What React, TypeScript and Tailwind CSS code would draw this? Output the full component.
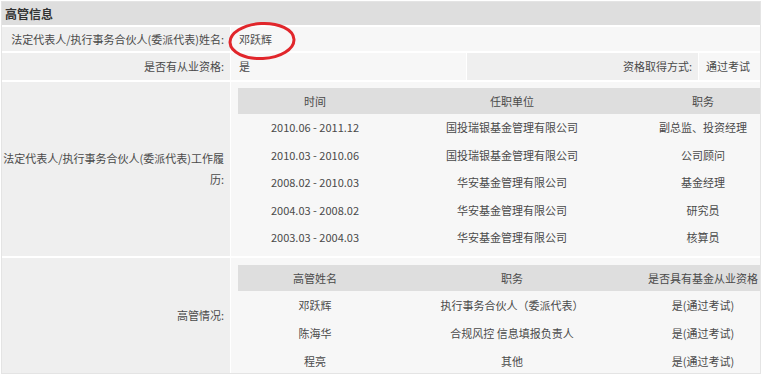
import React from "react";

const font = { fontFamily: '"Noto Sans CJK SC", "Noto Sans", sans-serif' };

function Nested({
  headers,
  rows,
  rowH,
}: {
  headers: string[];
  rows: string[][];
  rowH: string;
}) {
  return (
    <div className="w-[537px]">
      <div className="flex h-[26px] items-center bg-[#dedede]">
        <div className="w-[154px] text-center">{headers[0]}</div>
        <div className="w-[240px] text-center">{headers[1]}</div>
        <div className="w-[142px] text-center whitespace-nowrap">{headers[2]}</div>
      </div>
      {rows.map((r, i) => (
        <div key={i} className={`flex items-center ${rowH}`}>
          <div className="w-[154px] text-center">{r[0]}</div>
          <div className="w-[240px] text-center">{r[1]}</div>
          <div className="w-[142px] text-center whitespace-nowrap">{r[2]}</div>
        </div>
      ))}
    </div>
  );
}

export default function App() {
  return (
    <div className="w-[763px] h-[375px] bg-white overflow-hidden relative" style={font}>
      <div className="absolute left-[1px] top-[1px] w-[760px] h-[373px] border border-[#e4e4e4] pointer-events-none" />
      <div className="pt-[2px] pl-[2px] w-[760px] h-[373px] overflow-hidden text-[11px] text-[#4a4a4a] flex flex-col gap-[2px]">
        <div className="h-[23px] bg-[#dedede] flex items-center pl-[3px] font-bold text-[12px] text-[#333] shrink-0">
          高管信息
        </div>
        {/* row 1 */}
        <div className="flex h-[24px] gap-[1px] shrink-0">
          <div className="w-[228px] bg-[#efefef] flex items-center justify-end pr-[6px] whitespace-nowrap">
            法定代表人/执行事务合伙人(委派代表)姓名:
          </div>
          <div className="flex-1 bg-[#f7f7f7] flex items-center pl-[8px] relative">
            邓跃辉
          </div>
        </div>
        {/* row 2 */}
        <div className="flex h-[27px] gap-[1px] shrink-0">
          <div className="w-[228px] bg-[#efefef] flex items-center justify-end pr-[6px]">
            是否有从业资格:
          </div>
          <div className="w-[235px] bg-[#f7f7f7] flex items-center pl-[8px]">是</div>
          <div className="w-[231px] bg-[#efefef] flex items-center justify-end pr-[6px]">
            资格取得方式:
          </div>
          <div className="flex-1 bg-[#f7f7f7] flex items-center pl-[7px] whitespace-nowrap">
            通过考试
          </div>
        </div>
        {/* row 3 */}
        <div className="flex h-[174px] gap-[1px] shrink-0">
          <div className="w-[228px] bg-[#efefef] flex items-center justify-end pr-[6px] text-right leading-[21px] break-all">
            法定代表人/执行事务合伙人(委派代表)工作履历:
          </div>
          <div className="flex-1 bg-[#f7f7f7] pl-[7px] pt-[6px] overflow-hidden">
            <Nested
              rowH="h-[27.4px]"
              headers={["时间", "任职单位", "职务"]}
              rows={[
                ["2010.06 - 2011.12", "国投瑞银基金管理有限公司", "副总监、投资经理"],
                ["2010.03 - 2010.06", "国投瑞银基金管理有限公司", "公司顾问"],
                ["2008.02 - 2010.03", "华安基金管理有限公司", "基金经理"],
                ["2004.03 - 2008.02", "华安基金管理有限公司", "研究员"],
                ["2003.03 - 2004.03", "华安基金管理有限公司", "核算员"],
              ]}
            />
          </div>
        </div>
        {/* row 4 */}
        <div className="flex h-[115px] gap-[1px] shrink-0">
          <div className="w-[228px] bg-[#efefef] flex items-center justify-end pr-[6px]">
            高管情况:
          </div>
          <div className="flex-1 bg-[#f7f7f7] pl-[7px] pt-[7px] overflow-hidden">
            <Nested
              rowH="h-[28px]"
              headers={["高管姓名", "职务", "是否具有基金从业资格"]}
              rows={[
                ["邓跃辉", "执行事务合伙人（委派代表）", "是(通过考试)"],
                ["陈海华", "合规风控 信息填报负责人", "是(通过考试)"],
                ["程亮", "其他", "是(通过考试)"],
              ]}
            />
          </div>
        </div>
      </div>
      <svg
        className="absolute left-[225px] top-[20px] pointer-events-none"
        width="74"
        height="44"
        viewBox="0 0 74 44"
      >
        <ellipse
          cx="37"
          cy="21"
          rx="32"
          ry="17.5"
          fill="none"
          stroke="#e1262b"
          strokeWidth="3"
          transform="rotate(-3 37 21)"
        />
      </svg>
    </div>
  );
}
